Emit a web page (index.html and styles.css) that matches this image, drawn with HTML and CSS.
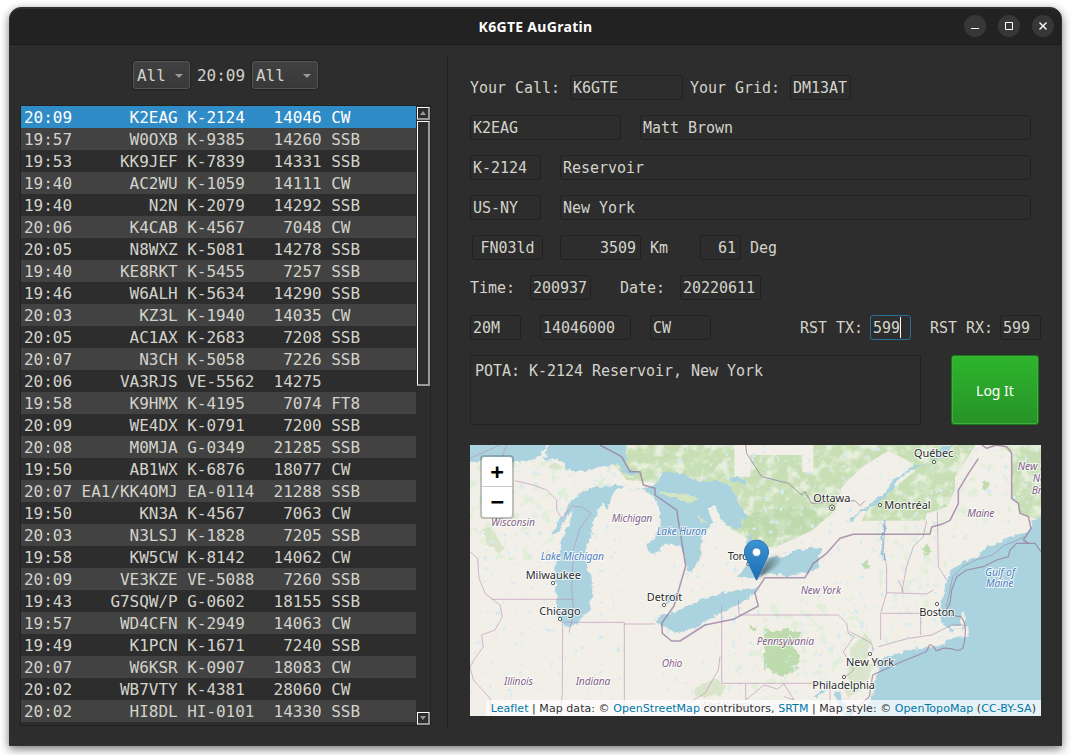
FILE: index.html
```html
<!DOCTYPE html>
<html lang="en">
<head>
<meta charset="utf-8">
<title>K6GTE AuGratin</title>
<link rel="stylesheet" href="styles.css">
</head>
<body>
<div class="window">
<header class="titlebar">
  <h1 class="title">K6GTE AuGratin</h1>
  <div class="controls">
    <span class="control"><svg viewBox="0 0 22 22"><path d="M7 13.5h8" stroke="#fff"/></svg></span>
    <span class="control"><svg viewBox="0 0 22 22"><path d="M7.5 7.5h7v7h-7z" stroke="#fff" fill="none"/></svg></span>
    <span class="control"><svg viewBox="0 0 22 22"><path d="M7.5 7.5l7 7M14.5 7.5l-7 7" stroke="#fff" stroke-width="1.4"/></svg></span>
  </div>
</header>
<main class="content">
<section class="spots">
  <div class="filters">
    <div class="select band">All<i class="arrow"></i></div>
    <div class="clock">20:09</div>
    <div class="select mode">All<i class="arrow"></i></div>
  </div>
  <div class="listbox">
<ul class="rows">
<li class="row selected">20:09      K2EAG K-2124   14046 CW</li>
<li class="row">19:57      W0OXB K-9385   14260 SSB</li>
<li class="row">19:53     KK9JEF K-7839   14331 SSB</li>
<li class="row">19:40      AC2WU K-1059   14111 CW</li>
<li class="row">19:40        N2N K-2079   14292 SSB</li>
<li class="row">20:06      K4CAB K-4567    7048 CW</li>
<li class="row">20:05      N8WXZ K-5081   14278 SSB</li>
<li class="row">19:40     KE8RKT K-5455    7257 SSB</li>
<li class="row">19:46      W6ALH K-5634   14290 SSB</li>
<li class="row">20:03       KZ3L K-1940   14035 CW</li>
<li class="row">20:05      AC1AX K-2683    7208 SSB</li>
<li class="row">20:07       N3CH K-5058    7226 SSB</li>
<li class="row">20:06     VA3RJS VE-5562  14275</li>
<li class="row">19:58      K9HMX K-4195    7074 FT8</li>
<li class="row">20:09      WE4DX K-0791    7200 SSB</li>
<li class="row">20:08      M0MJA G-0349   21285 SSB</li>
<li class="row">19:50      AB1WX K-6876   18077 CW</li>
<li class="row">20:07 EA1/KK4OMJ EA-0114  21288 SSB</li>
<li class="row">19:50       KN3A K-4567    7063 CW</li>
<li class="row">20:03      N3LSJ K-1828    7205 SSB</li>
<li class="row">19:58      KW5CW K-8142   14062 CW</li>
<li class="row">20:09     VE3KZE VE-5088   7260 SSB</li>
<li class="row">19:43    G7SQW/P G-0602   18155 SSB</li>
<li class="row">19:57     WD4CFN K-2949   14063 CW</li>
<li class="row">19:49      K1PCN K-1671    7240 SSB</li>
<li class="row">20:07      W6KSR K-0907   18083 CW</li>
<li class="row">20:02     WB7VTY K-4381   28060 CW</li>
<li class="row">20:02      HI8DL HI-0101  14330 SSB</li>
</ul>
    <div class="scrollbar">
      <span class="step"><svg viewBox="0 0 6 4"><path d="M0 4L3 0l3 4z" fill="#999"/></svg></span>
      <span class="thumb"></span>
      <span class="track"></span>
      <span class="step"><svg viewBox="0 0 6 4"><path d="M0 0l3 4 3-4z" fill="#999"/></svg></span>
    </div>
  </div>
</section>
<section class="log">
  <div class="line"><label class="w100">Your Call:</label><span class="field w113">K6GTE</span><label class="w100 gap7">Your Grid:</label><span class="field w61">DM13AT</span></div>
  <div class="line"><span class="field w151">K2EAG</span><span class="field w391 gap19">Matt Brown</span></div>
  <div class="line"><span class="field w71">K-2124</span><span class="field w471 gap19">Reservoir</span></div>
  <div class="line"><span class="field w71">US-NY</span><span class="field w471 gap19">New York</span></div>
  <div class="line bearing"><span class="field w71 center">FN03ld</span><span class="field w81 gap17 right">3509</span><label class="w50 gap9">Km</label><span class="field w41 right">61</span><label class="gap9">Deg</label></div>
  <div class="line"><label class="w60">Time:</label><span class="field w61">200937</span><label class="w60 gap29">Date:</label><span class="field w81">20220611</span></div>
  <div class="line"><span class="field w51">20M</span><span class="field w91 gap19">14046000</span><span class="field w61 gap19">CW</span><label class="w70 push">RST TX:</label><span class="field w41 focus">599<i class="caret"></i></span><label class="w70 gap19">RST RX:</label><span class="field w41">599</span></div>
  <div class="comment"><div class="notes">POTA: K-2124 Reservoir, New York</div><button class="submit">Log It</button></div>
  <div class="map">
<svg class="tiles" viewBox="15 15 1713 813">
<defs>
<filter id="woods" x="0" y="0" width="100%" height="100%"><feTurbulence type="fractalNoise" baseFrequency=".035" numOctaves="5" seed="8"/><feColorMatrix values="0 0 0 0 .74  0 0 0 0 .86  0 0 0 0 .68  0 9 0 0 -5.2"/><feComposite in2="SourceGraphic" operator="in"/></filter>
<filter id="clearings" x="0" y="0" width="100%" height="100%"><feTurbulence type="fractalNoise" baseFrequency=".03" numOctaves="5" seed="3"/><feColorMatrix values="0 0 0 0 .94  0 0 0 0 .94  0 0 0 0 .88  0 4 0 0 -1.9"/><feComposite in2="SourceGraphic" operator="in"/></filter>
<filter id="ponds" x="0" y="0" width="100%" height="100%"><feTurbulence type="fractalNoise" baseFrequency=".055" numOctaves="4" seed="21"/><feColorMatrix values="0 0 0 0 .67  0 0 0 0 .83  0 0 0 0 .88  0 0 12 0 -8.2"/><feComposite in2="SourceGraphic" operator="in"/></filter>
<filter id="shore" x="-2%" y="-2%" width="104%" height="104%"><feTurbulence type="fractalNoise" baseFrequency=".05" numOctaves="4" seed="5"/><feDisplacementMap in="SourceGraphic" scale="20" xChannelSelector="R" yChannelSelector="G"/></filter>
<filter id="soft"><feGaussianBlur stdDeviation="4"/></filter>
<linearGradient id="pin" x2="0" y2="1"><stop stop-color="#3a94d2"/><stop offset="1" stop-color="#1d6cb4"/></linearGradient>
<linearGradient id="cast"><stop stop-color="#000" stop-opacity=".6"/><stop offset="1" stop-color="#000" stop-opacity=".05"/></linearGradient>
</defs>
<path fill="#f2efe9" d="M0 0h1740v840H0z"/>
<path filter="url(#woods)" d="M15 60h460v140H15zM15 200h250v160H15z" />
<path filter="url(#woods)" opacity=".8" d="M900 490l300-30 20 220-200 100-350 50 80-110 130-120zM1230 240h190l40 80-20 100-40 100h-150zM1440 60l180-40 20 200-130 80-110-20z"/>
<!-- Canadian forest -->
<path fill="#c8dfb6" d="M495 15h1036l-28 45-33 50v40l-25 50-30 12-30 8-5 22h-190l20-40 80-60 60-50-20-30-60-30-80 50-60 60-20 70-70 60-110 50-60-2-30-30-40-20-50-100-25-20-70-15-170-15-20-25-20-20-10-40zM1565 15h163v225l-38-10-25-10-5-30-20-15V40l-30-20z"/>
<path filter="url(#clearings)" opacity=".65" d="M495 15h1036l-28 45-33 50v40l-25 50-30 12-30 8-5 22h-190l20-40 80-60 60-50-20-30-60-30-80 50-60 60-20 70-70 60-110 50-60-2-30-30-40-20-50-100-25-20-70-15-170-15-20-25-20-20-10-40zM1565 15h163v225l-38-10-25-10-5-30-20-15V40l-30-20z"/>
<path fill="#b7d7a6" opacity=".55" filter="url(#shore)" d="M820 235l80-25 120-10 60 35-60 45-170 20z"/>
<path fill="#f2efe9" d="M808 15h237v82h-33V45H856v65h-48z"/>
<path fill="#bddbad" filter="url(#shore)" d="M898 565l20 8 50-5 40 5-5 25-20 20 25 35-15 40-45 15-45-20-6 10zM850 558h25l-5 12h-18zM1550 124h20v22h-20zM1365 325l25-10 10 20-15 12zM1190 370l20-10 5 20-20 10z"/>
<path fill="#cde0b9" opacity=".6" filter="url(#shore)" d="M1155 625l45-45 20 20-15 60 20 20-30 60-50 40zM690 745l60-30 35 20-15 30-75 10zM240 78l30-10 25 15-25 8zM50 265l25-5 25 40 20 20-20 20-35-30z"/>
<path filter="url(#ponds)" d="M15 60h460v750H15zM560 15h1168v820H560z"/>
<!-- Lakes and sea -->
<g fill="#aad3df" filter="url(#shore)">
<path d="M0 0h245v15l-17 30-28 14-55 8-60-7-85 12zM260 0h225v15l-5 35 15 42 30 7-20 8-38-12-5-25-60 12-45 15-50-10-15-22-22-8-40 4 18-34z"/>
<path d="M225 50l-38 24 28 0 33-30z" fill="#f2efe9"/>
<path d="M570 135l-35 12-28 3-33-15-34 4-55 2-45 20-30 30-18 40-33 48 5 8 24-22 12-25 31-38-20 50-20 48-6 50-15 30 3 50 1 90 16 30 20 10 30-10 30-40 12-50-2-45-20-65 5-30 15-40 5-40 30-50 14 24 10-43 15-25 25-10 22 15 38 0 37 30 12 42-2 38-20 38-23 22 5 18 25 2 25-27 30-6 18 12 12 32 9 48 16-2 25-48 6-64 28-44-15-38 22-5 23 45 35 20h25l-5-26 20 0-10-25-24-40-21-40-30-10-65-1-40-20-60-8z"/>
<path d="M850 280l10 8 2 25-20-5zM820 410l25-35 25-20 40-5 50-5 40-15 40-10 30 5-10 25 5 30-25 15-70 10-60-5-40 12zM565 550l25-25 40-10 40-20 80-30 70-15 60-8-10 18-50 35-50 20-70 45-65 20-35-20zM600 495l10-28 30-10 5 8-30 20z"/>
<path d="M1760 225l-32 5-28 10v25l-25 15-40 10-30 15-40 15-20 25-40 15-30 15-20 25-15 30-2 30-8 45-5 25 10 20 25 30 10-15h30l5-10 7 35-42 5-25 5-25 20-60 5-80 20-30 15-10 15v15l-10 50-10 30-30 40-20 20v58h605z"/>
<path d="M1110 750l12 3 10 30 30 30 8 20h-30l-20-30zM1050 770l20-20 10 5-20 20z"/>
<path d="M790 113l30-2 22 10-4 8-40-5zM1437 15h30l-25 30-30 12-50 20-60 40-20 35-40 35-60 35-25 22-5-5 38-30 75-55 18-32 55-40 60-20z"/>
</g>
<g filter="url(#shore)">
<path fill="#d5e5c1" d="M575 148l35 10 30 5 40 2 20 18-25 5-30-8-45-12zM700 225l15 10 5 18-12-3z"/>
<g fill="#f2efe9"><path d="M1240 635l95-20 40-20-15 22-85 26-35 10zM1430 590l60-2-15 6z"/><path d="M1490 515l7-2 5 40-10 10-40 3 5-8 28-3z"/></g>
<path fill="none" stroke="#8cc8e0" stroke-width="5" d="M1260 242l-3 30-5 50 5 40"/>
</g>
<!-- State borders -->
<g fill="none" stroke="#b98fb6" stroke-opacity=".6" stroke-width="3">
<path d="M150 122l55 13 40 15 30 30v30l15 25 30-35h30l28 20-33 45-20 65-5 120 7 70-15 57M80 478h245M15 335l23 20 4 60 18 45 45 35 7 35-22 40-40 15 5 35-25 35-15 25 10 40 50 55 3 53M293 547l-1 213-7 68M293 547h185v281M478 552h92M15 55L105 15M125 15l-15 40"/>
<path d="M770 495v235h315M820 480l2 45h298l25 25 5 30 17 10-32 45 32 55-32 25M765 650l-5 40-40 70-35 20M842 730v50l25-20 30-25 40 12 20-15 30 48-30-10M1095 730v100"/>
<path d="M1260 242l-5 88 10 50v78l-18 62v80M1385 242l-10 48-30 30-20 60-15 78M1417 215l3 165 25 40M1265 458l120 4 20-12M1250 520h117v65M1155 575l65 35 5 25M1300 420l17 40"/>
</g>
<g fill="none" stroke="#967a9c" stroke-opacity=".75" stroke-width="4.5" stroke-linejoin="round">
<path d="M405 15l65 35 25 45h30l10 40 35 10v20l65 45 27 168-35 120-37 52 2 30 28 23h25l75-48 85-17 75-40-10-38v-2l30-45h120l25-43 40-30 40-45 40-12h230l5-22 30-8 25-12 25-50v-40l30-50 30-45M1550 15l15 10 30-10 30 5 15 20v135l20 15 5 30 25 10 8 35-23 35 15 10"/>
<path d="M842 15l3 25 45 70 80 20 40 35 10-10 20 35 130-8 15 15 15-15" stroke-width="3"/>
<path d="M1728 335l-18-25h-55l-20 20-5 20-35 10-40 20-50 10-30 20-15 40-5 40-12 20 5 15 40 5q15 20 13 45-2 35-8 50-8 8-20 5-25-8-40-5-10 6-20 7-10-20-20-17-5 16-10 20l-80 33-80 37-10 65-40 35-30 35" stroke-width="3.5"/>
<path d="M1678 290l-30 15-30 10-35 30-50 15-40 20-30 30-10 50-10 40M1240 620l90-25 70-10 60-30h40" stroke-width="2"/>
</g>
<!-- Places -->
<g fill="#fff" stroke="#444" stroke-width="2.5"><circle cx="264" cy="429" r="5"/><circle cx="1101" cy="203" r="8"/><circle cx="850" cy="372" r="5"/><circle cx="597" cy="495" r="5"/><circle cx="1407" cy="66" r="5"/><circle cx="1245" cy="195" r="5"/><circle cx="285" cy="537" r="5"/><circle cx="1215" cy="642" r="5"/><circle cx="1137" cy="711" r="5"/><circle cx="1416" cy="492" r="5"/></g><circle cx="1101" cy="203" r="3" fill="#444"/>
<g class="state">
<text x="78" y="257" textLength="132">Wisconsin</text><text x="440" y="245" textLength="122">Michigan</text><text x="1507" y="230" textLength="81">Maine</text><text x="1658" y="91">New B</text><text x="1703" y="127">No</text><text x="1700" y="162">Br</text><text x="117" y="735" textLength="87">Illinois</text><text x="332" y="736" textLength="104">Indiana</text><text x="590" y="682" textLength="62">Ohio</text><text x="1007" y="462" textLength="121">New York</text><text x="875" y="615" textLength="172">Pennsylvania</text><text x="705" y="808" textLength="165" opacity=".5">West Virginia</text>
</g>
<g class="water"><text x="227" y="360" textLength="190">Lake Michigan</text><text x="575" y="284" textLength="150">Lake Huron</text><text x="1560" y="407" textLength="90">Gulf of</text><text x="1563" y="442" textLength="82">Maine</text></g>
<g class="city"><text x="182" y="416" textLength="166">Milwaukee</text><text x="1045" y="185" textLength="111">Ottawa</text><text x="788" y="359" textLength="110">Toronto</text><text x="545" y="482" textLength="107">Detroit</text><text x="1347" y="52" textLength="118">Québec</text><text x="1258" y="206" textLength="139">Montréal</text><text x="223" y="524" textLength="124">Chicago</text><text x="1143" y="678" textLength="144">New York</text><text x="1042" y="748" textLength="188">Philadelphia</text><text x="1363" y="527" textLength="106">Boston</text></g>
<path d="M875 417l28-50q20-25 42-20 12 12-12 32z" fill="url(#cast)" filter="url(#soft)"/>
<g transform="translate(837 299) scale(3)"><path d="M12.5.5C5.9.5.5 5.7.5 12.2c0 3 1.4 6 2.9 8.9l9.1 19.4 9.1-19.4c1.5-2.9 2.9-5.9 2.9-8.9C24.5 5.7 19.1.5 12.5.5z" fill="url(#pin)" stroke="#2a70ad"/><circle cx="12.5" cy="12.5" r="4.2" fill="#fff" stroke="#3278ae" stroke-width=".7"/></g>
</svg>
    <div class="zoom"><span class="zoom-in">+</span><span class="zoom-out">−</span></div>
    <div class="credit"><a>Leaflet</a> | Map data: © <a>OpenStreetMap</a> contributors, <a>SRTM</a> | Map style: © <a>OpenTopoMap</a> (<a>CC-BY-SA</a>)</div>
  </div>
</section>
</main>
</div>
</body>
</html>
```

FILE: styles.css
```css
* { box-sizing: border-box; }
body {
  margin: 0;
  height: 755px;
  padding: 7px 9px 9px;
  overflow: hidden;
  background: #fff;
  color: #d3d3cb;
  font: 15px "DejaVu Sans Mono", monospace;
}
.window {
  height: 739px;
  background: #2d2d2d;
  border: 1px solid #303030;
  border-radius: 12px 12px 0 0;
  box-shadow: 0 3px 10px rgba(0, 0, 0, .55);
}
.titlebar {
  height: 37px;
  display: grid;
  grid-template-columns: 1fr auto 1fr;
  align-items: center;
  background: #222;
  border-top: 1px solid #303030;
  border-bottom: 1px solid #191919;
  border-radius: 11px 11px 0 0;
}
.title {
  grid-column: 2;
  margin: 0;
  color: #fff;
  font: bold 14px/20px "Noto Sans", sans-serif;
  letter-spacing: .3px;
}
.controls { display: flex; justify-content: flex-end; gap: 12px; padding-right: 7px; margin-top: -1px; }
.control { width: 22px; height: 22px; border-radius: 50%; background: #373737; }
.control svg { display: block; width: 22px; height: 22px; }
.content { display: flex; height: 700px; }

.spots { width: 438px; height: 672px; margin-top: 10px; padding: 5px 16px 0 10px; border-right: 1px solid #1f1f1f; }
.filters { display: flex; height: 30px; margin-left: 113px; font-size: 16px; letter-spacing: -.03px; line-height: 28px; }
.select {
  display: flex;
  align-items: center;
  justify-content: space-between;
  padding: 1px 6px 0 3px;
  border: 1px solid #555;
  border-radius: 3px;
  background: linear-gradient(#414141, #383838);
  box-shadow: 0 0 0 1px #232323;
}
.band { width: 57px; height: 28px; margin-top: 1px; }
.mode { width: 66px; height: 28px; margin-top: 1px; }
.clock { width: 62px; padding-left: 7px; margin-top: 2px; }
.arrow { border: 4px solid transparent; border-top-color: #999; border-bottom: 0; }
.listbox { display: flex; height: 621px; margin-top: 15px; border: 1px solid #222; }
.rows { width: 395px; margin: 0; padding: 0; list-style: none; }
.row { height: 22px; padding-left: 3px; white-space: pre; font-size: 16px; line-height: 24px; letter-spacing: -.032px; }
.row:nth-child(even) { background: #424242; }
.row.selected { background: #308cc6; color: #fff; }
.scrollbar { width: 14px; display: flex; flex-direction: column; padding-top: 1px; }
.step, .thumb { margin-left: 1px; border: 1px solid #fff; border-right: 2px solid #999; border-bottom: 2px solid #999; }
.step { height: 13px; display: flex; align-items: center; justify-content: center; }
.step svg { width: 6px; height: 4px; }
.thumb { height: 265px; margin-top: 1px; }
.track { flex: 1; }

.log { padding: 30px 20px 0 22px; display: flex; flex-direction: column; gap: 15px; letter-spacing: -.03px; }
.line { display: flex; width: 571px; height: 25px; line-height: 27px; white-space: pre; }
.bearing { padding-left: 2px; }
.field { display: block; height: 25px; padding: 0 2px; border: 1px solid #212121; border-radius: 3px; line-height: 25px; }
.field.right { text-align: right; padding-right: 4px; }
.field.center { text-align: center; }
.field.focus { display: flex; border-color: #2a6d98; }
.caret { width: 1px; height: 21px; margin-top: 1px; background: #fff; }
.w41 { width: 41px; } .w50 { width: 50px; } .w51 { width: 51px; }
.w60 { width: 60px; } .w61 { width: 61px; } .w70 { width: 70px; }
.w71 { width: 71px; } .w81 { width: 81px; } .w91 { width: 91px; }
.w100 { width: 100px; } .w113 { width: 113px; } .w151 { width: 151px; }
.w391 { width: 391px; } .w471 { width: 471px; }
.gap7 { margin-left: 7px; } .gap9 { margin-left: 9px; } .gap17 { margin-left: 17px; }
.gap19 { margin-left: 19px; } .gap29 { margin-left: 29px; } .push { margin-left: auto; }
.comment { display: flex; justify-content: space-between; width: 569px; height: 70px; }
.notes { width: 451px; padding: 4px; border: 1px solid #222; line-height: 22px; }
.submit {
  width: 88px;
  border: 1px solid #157a15;
  border-radius: 3px;
  background: linear-gradient(#2eb52d, #279227);
  box-shadow: inset 0 0 0 1px #3fae3e;
  color: #fff;
  font: 14px "Noto Sans", sans-serif;
}
.map { position: relative; width: 571px; height: 271px; margin-top: 5px; overflow: hidden; letter-spacing: 0; }
.tiles { display: block; width: 571px; height: 271px; }
.tiles text { font-family: "Noto Sans", sans-serif; font-size: 33px; paint-order: stroke; stroke: #fff; stroke-opacity: .75; stroke-width: 6px; stroke-linejoin: round; }
.tiles .state text { fill: #825f87; font-style: italic; font-size: 31px; }
.tiles .water text { fill: #4f80bd; font-style: italic; font-size: 31px; }
.tiles .city text { fill: #2c2c2c; }
.zoom {
  position: absolute;
  left: 10px;
  top: 10px;
  width: 34px;
  border: 2px solid rgba(0, 0, 0, .2);
  border-radius: 4px;
  background: #fff;
  background-clip: padding-box;
  color: #000;
  font: bold 22px/30px "DejaVu Sans Mono", monospace;
  text-align: center;
}
.zoom span { display: block; height: 30px; }
.zoom .zoom-in { border-bottom: 1px solid #ccc; }
.credit {
  position: absolute;
  right: 0;
  bottom: 0;
  padding: 1px 5px 0;
  background: rgba(255, 255, 255, .7);
  color: #333;
  font: 11px/15px "DejaVu Sans", sans-serif;
  letter-spacing: .055px;
  white-space: nowrap;
}
.credit a { color: #0078a8; }
```
